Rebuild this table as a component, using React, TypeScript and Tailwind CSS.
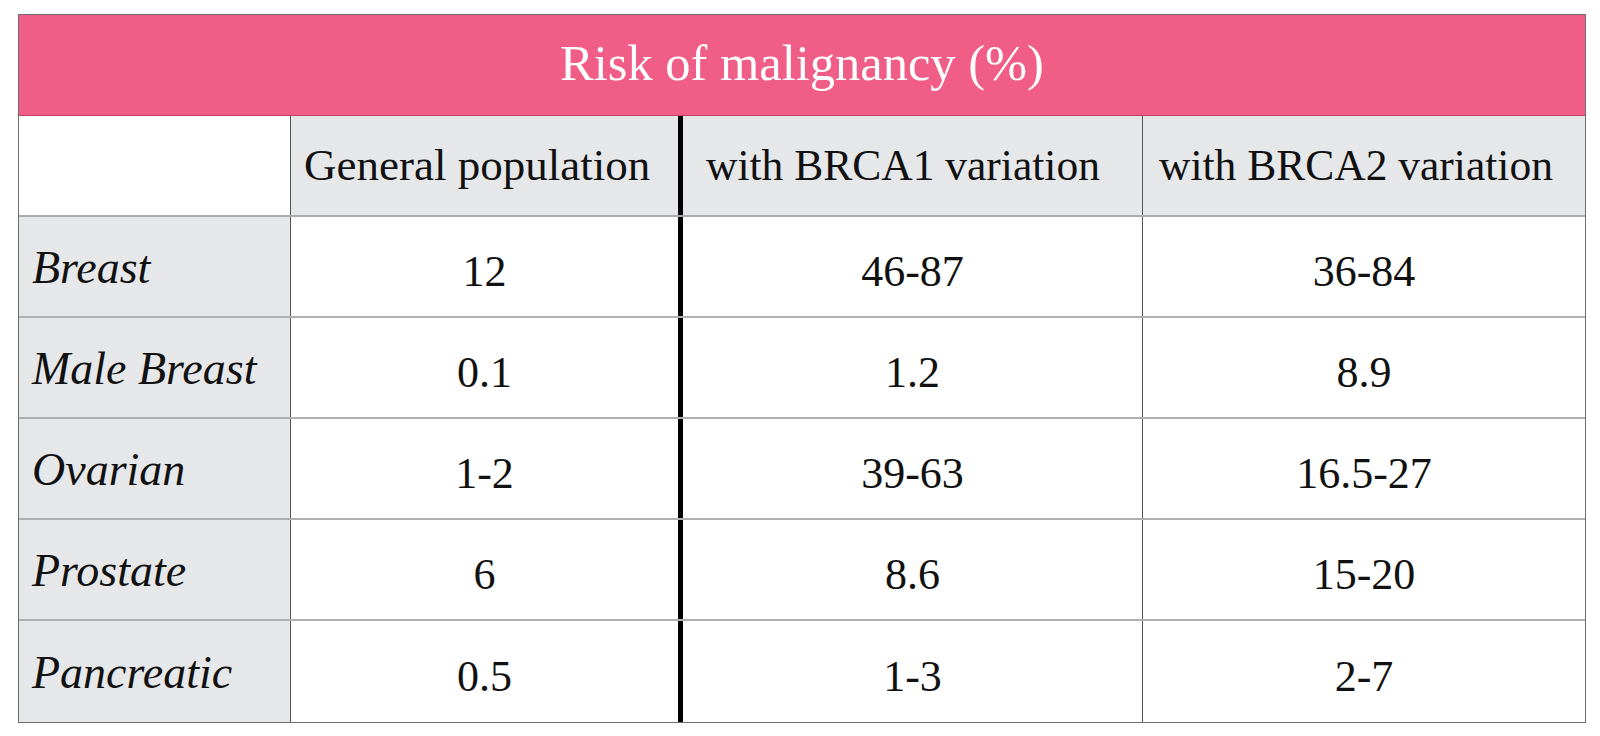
import React from "react";

const rows = [
  { name: "Breast", a: "12", b: "46-87", c: "36-84" },
  { name: "Male Breast", a: "0.1", b: "1.2", c: "8.9" },
  { name: "Ovarian", a: "1-2", b: "39-63", c: "16.5-27" },
  { name: "Prostate", a: "6", b: "8.6", c: "15-20" },
  { name: "Pancreatic", a: "0.5", b: "1-3", c: "2-7" },
];

const font = { fontFamily: '"Liberation Serif", "Times New Roman", serif' };

export default function App() {
  return (
    <div className="w-[1600px] h-[736px] bg-white pt-[14px] pl-[18px]" style={font}>
      <div className="w-[1568px] border border-[#6e6e6e] text-[#111]">
        <div className="h-[101px] bg-[#f05d87] border-b border-[#c43f66] flex items-center justify-center text-white text-[50.5px] leading-none pb-[4px]">
          Risk of malignancy (%)
        </div>
        <div className="grid grid-cols-[272px_392px_460px_442px] h-[101px] border-b-2 border-[#ababab]">
          <div className="bg-white border-r border-[#555]" />
          <div className="bg-[#e6e7e9] border-r-[5px] border-black flex items-center pl-[13px] text-[45px] leading-none">
            General population
          </div>
          <div className="bg-[#e6e7e9] border-r border-[#555] flex items-center pl-[23px] text-[43.5px] leading-none">
            with BRCA1 variation
          </div>
          <div className="bg-[#e6e7e9] flex items-center pl-[16px] text-[43.5px] leading-none">
            with BRCA2 variation
          </div>
        </div>
        {rows.map((r, i) => (
          <div
            key={r.name}
            className={
              "grid grid-cols-[272px_392px_460px_442px] h-[101px] " +
              (i < rows.length - 1 ? "border-b-2 border-[#b0b0b0]" : "")
            }
          >
            <div className="bg-[#e6e7e9] border-r border-[#555] flex items-center pl-[13px] text-[46px] italic leading-none pt-[2px]">
              {r.name}
            </div>
            <div className="bg-white border-r-[5px] border-black flex items-center justify-center text-[44px] leading-none pt-[10px]">
              {r.a}
            </div>
            <div className="bg-white border-r border-[#555] flex items-center justify-center text-[44px] leading-none pt-[10px]">
              {r.b}
            </div>
            <div className="bg-white flex items-center justify-center text-[44px] leading-none pt-[10px]">
              {r.c}
            </div>
          </div>
        ))}
      </div>
    </div>
  );
}
